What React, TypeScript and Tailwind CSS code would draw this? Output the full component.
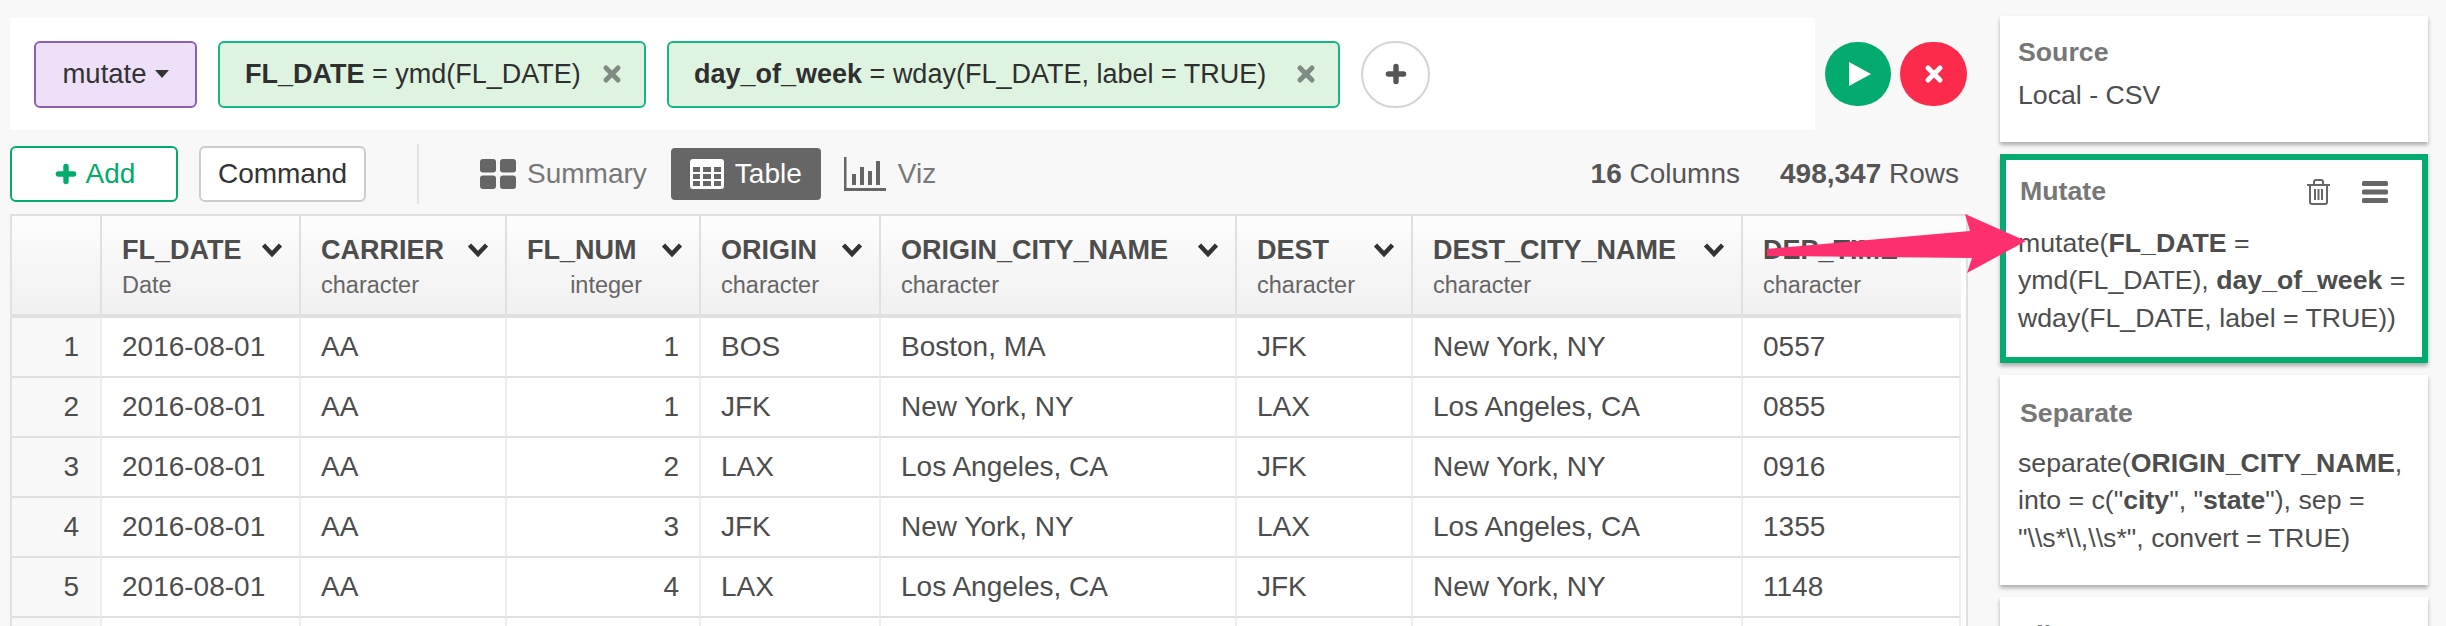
import React from 'react';
import { Plus, X } from 'lucide-react';

const font = "font-['Liberation_Sans',Arial,sans-serif]";

const columns = [
  { name: 'FL_DATE', type: 'Date', w: 'w-[199px]' },
  { name: 'CARRIER', type: 'character', w: 'w-[206px]' },
  { name: 'FL_NUM', type: 'integer', w: 'w-[194px]', right: true },
  { name: 'ORIGIN', type: 'character', w: 'w-[180px]' },
  { name: 'ORIGIN_CITY_NAME', type: 'character', w: 'w-[356px]' },
  { name: 'DEST', type: 'character', w: 'w-[176px]' },
  { name: 'DEST_CITY_NAME', type: 'character', w: 'w-[330px]' },
  { name: 'DEP_TIME', type: 'character', w: 'w-[220px]' },
];

// last row is the one cut off by the window, only its cell lines show
const rows = [
  ['1', '2016-08-01', 'AA', '1', 'BOS', 'Boston, MA', 'JFK', 'New York, NY', '0557'],
  ['2', '2016-08-01', 'AA', '1', 'JFK', 'New York, NY', 'LAX', 'Los Angeles, CA', '0855'],
  ['3', '2016-08-01', 'AA', '2', 'LAX', 'Los Angeles, CA', 'JFK', 'New York, NY', '0916'],
  ['4', '2016-08-01', 'AA', '3', 'JFK', 'New York, NY', 'LAX', 'Los Angeles, CA', '1355'],
  ['5', '2016-08-01', 'AA', '4', 'LAX', 'Los Angeles, CA', 'JFK', 'New York, NY', '1148'],
  ['', '', '', '', '', '', '', '', ''],
];

const Chevron = () => (
  <svg viewBox="0 0 22 16" className="w-[22px] h-[16px] shrink-0" fill="none" stroke="#333" strokeWidth="4.5">
    <path d="M2.5 3 L11 12 L19.5 3" />
  </svg>
);

const Chip = ({ bold, rest, w }: { bold: string; rest: string; w: string }) => (
  <div className={`${w} h-[67px] flex items-center justify-between pl-[25px] pr-[20px] bg-[#dff3e1] border-2 border-[#17b585] rounded-[6px] text-[27px] text-[#2f2f2f]`}>
    <span className="whitespace-nowrap"><b>{bold}</b> = {rest}</span>
    <X size={24} strokeWidth={5} className="text-[#7f8c84]" />
  </div>
);

const App = () => {
  return (
    <div className={`${font} relative w-[2446px] h-[626px] overflow-hidden bg-[#f8f8f8] flex`}>
      <div className="w-[2000px] shrink-0 pl-[10px] pt-[18px]">
        {/* Command bar */}
        <div className="flex items-center">
          <div className="w-[1805px] h-[112px] bg-white flex items-center pl-[24px] gap-[21px]">
            <div className="w-[163px] h-[67px] flex items-center justify-center gap-[8px] bg-[#eee0f8] border-2 border-[#8e5fb2] rounded-[6px] text-[27.5px] text-[#333]">
              mutate
              <span className="w-0 h-0 border-x-[7px] border-x-transparent border-t-[8px] border-t-[#333]" />
            </div>
            <Chip bold="FL_DATE" rest="ymd(FL_DATE)" w="w-[428px]" />
            <Chip bold="day_of_week" rest="wday(FL_DATE, label = TRUE)" w="w-[673px]" />
            <div className="w-[69px] h-[67px] rounded-full border-2 border-[#d4d4d4] flex items-center justify-center">
              <Plus size={26} strokeWidth={5} className="text-[#555]" />
            </div>
          </div>
          <div className="ml-[10px] flex gap-[9px]">
            <div className="w-[66px] h-[64px] rounded-full bg-[#04ab6e] flex items-center justify-center">
              <svg viewBox="0 0 22 24" className="w-[22px] h-[24px] ml-[3px]" fill="white">
                <path d="M0 0 L22 12 L0 24 Z" />
              </svg>
            </div>
            <div className="w-[67px] h-[64px] rounded-full bg-[#fd2b4b] flex items-center justify-center">
              <X size={24} strokeWidth={5} className="text-white" />
            </div>
          </div>
        </div>

        {/* Toolbar */}
        <div className="h-[84px] flex items-center pt-[3px] pr-[41px] text-[28px]">
          <div className="w-[168px] h-[56px] flex items-center justify-center gap-[7px] bg-white border-2 border-[#04ab6e] rounded-[6px] text-[#04ab6e]">
            <Plus size={26} strokeWidth={5} />
            Add
          </div>
          <div className="ml-[21px] w-[167px] h-[56px] flex items-center justify-center bg-white border-2 border-[#cccccc] rounded-[6px] text-[#333]">
            Command
          </div>
          <div className="ml-[51px] w-[2px] h-[60px] bg-[#e2e2e2]" />
          <div className="ml-[61px] flex items-center gap-[11px] text-[#777]">
            <svg viewBox="0 0 36 30" className="w-[36px] h-[30px]" fill="#666">
              <rect x="0" y="0" width="16" height="13.5" rx="3" />
              <rect x="20" y="0" width="16" height="13.5" rx="3" />
              <rect x="0" y="16.5" width="16" height="13.5" rx="3" />
              <rect x="20" y="16.5" width="16" height="13.5" rx="3" />
            </svg>
            Summary
          </div>
          <div className="ml-[24px] w-[150px] h-[52px] flex items-center justify-center gap-[11px] bg-[#666] rounded-[4px] text-white">
            <svg viewBox="0 0 34 30" className="w-[34px] h-[30px]" fill="white">
              <path fillRule="evenodd" d="M3 0h28a3 3 0 0 1 3 3v24a3 3 0 0 1-3 3H3a3 3 0 0 1-3-3V3a3 3 0 0 1 3-3zM3 8v5h7V8zm10 0v5h8V8zm11 0v5h7V8zM3 15v5h7v-5zm10 0v5h8v-5zm11 0v5h7v-5zM3 22v5h7v-5zm10 0v5h8v-5zm11 0v5h7v-5z" />
            </svg>
            Table
          </div>
          <div className="ml-[23px] flex items-center gap-[12px] text-[#777]">
            <svg viewBox="0 0 42 34" className="w-[42px] h-[34px]" fill="#666">
              <rect x="0" y="0" width="2.5" height="34" />
              <rect x="0" y="31" width="42" height="3" />
              <rect x="8" y="17" width="4" height="11" />
              <rect x="16" y="10" width="4" height="18" />
              <rect x="24" y="14" width="4" height="14" />
              <rect x="32" y="4" width="4" height="24" />
            </svg>
            Viz
          </div>
          <div className="ml-auto flex gap-[40px] text-[#555]">
            <span><b>16</b> Columns</span>
            <span><b>498,347</b> Rows</span>
          </div>
        </div>

        {/* Data table */}
        <div className="w-[1958px] border-x-2 border-t-2 border-[#e0e0e0] bg-white overflow-hidden">
          <table className="table-fixed border-separate border-spacing-0 w-[1949px]">
            <thead>
              <tr className="bg-gradient-to-b from-[#fdfdfd] to-[#f0f0f0] text-[#4d4d4d]">
                <th className="w-[88px] h-[102px] p-0 border-b-[4px] border-[#e0e0e0]" />
                {columns.map((col) => (
                  <th key={col.name} className={`${col.w} h-[102px] p-0 pt-[4px] pl-[20px] pr-[16px] border-l-2 border-b-[4px] border-[#e0e0e0] text-left font-normal align-middle`}>
                    <div className="flex items-center justify-between text-[27px] font-bold leading-[36px] whitespace-nowrap">
                      {col.name}
                      <Chevron />
                    </div>
                    <div className={`text-[23.5px] leading-[34px] text-[#666] ${col.right ? 'text-right pr-[41px]' : ''}`}>{col.type}</div>
                  </th>
                ))}
              </tr>
            </thead>
            <tbody className="text-[28px] text-[#4d4d4d]">
              {rows.map((row, r) => (
                <tr key={r} className="bg-white">
                  {row.map((cell, i) => (
                    <td
                      key={i}
                      className={
                        i === 0
                          ? 'h-[60px] p-0 pr-[21px] text-right bg-[#f8f8f8] border-b-2 border-[#e0e0e0]'
                          : `h-[60px] p-0 px-[20px] border-l-2 border-l-[#eeeeee] border-b-2 border-b-[#e0e0e0] whitespace-nowrap ${i === 3 ? 'text-right' : ''} ${i === 8 ? 'border-r-2 border-r-[#eeeeee]' : ''}`
                      }
                    >
                      {cell}
                    </td>
                  ))}
                </tr>
              ))}
            </tbody>
          </table>
        </div>
      </div>

      {/* Step sidebar */}
      <div className="w-[428px] shrink-0 pt-[16px] flex flex-col gap-[12px] text-[26.7px] leading-[37.5px] text-[#4d4d4d]">
        <div className="h-[126px] shrink-0 bg-white shadow-[0_3px_4px_rgba(0,0,0,0.3)] px-[18px] pt-[18px]">
          <div className="font-bold text-[#777]">Source</div>
          <div className="mt-[5px]">Local - CSV</div>
        </div>
        <div className="h-[209px] shrink-0 bg-white border-[6px] border-[#04ab6e] shadow-[0_3px_4px_rgba(0,0,0,0.3)] px-[12px] pt-[13px]">
          <div className="flex items-center justify-between pr-[22px]">
            <span className="font-bold text-[#777] pl-[2px]">Mutate</span>
            <span className="flex items-center gap-[32px]">
              <svg viewBox="0 0 23 26" className="w-[23px] h-[26px]" fill="none" stroke="#666" strokeWidth="2">
                <path d="M0 6 H23 M7 6 V3 a2 2 0 0 1 2-2 h5 a2 2 0 0 1 2 2 V6 M3 6 V23 a2 2 0 0 0 2 2 h13 a2 2 0 0 0 2-2 V6 M8 10 V21 M11.5 10 V21 M15 10 V21" />
              </svg>
              <svg viewBox="0 0 26 22" className="w-[26px] h-[22px]" fill="#666">
                <rect y="0" width="26" height="5" rx="1.5" />
                <rect y="8.5" width="26" height="5" rx="1.5" />
                <rect y="17" width="26" height="5" rx="1.5" />
              </svg>
            </span>
          </div>
          <div className="mt-[14px]">
            mutate(<b>FL_DATE</b> = ymd(FL_DATE), <b>day_of_week</b> = wday(FL_DATE, label = TRUE))
          </div>
        </div>
        <div className="h-[210px] shrink-0 bg-white shadow-[0_3px_4px_rgba(0,0,0,0.3)] px-[18px] pt-[20px]">
          <div className="font-bold text-[#777] pl-[2px]">Separate</div>
          <div className="mt-[12px]">
            separate(<b>ORIGIN_CITY_NAME</b>, into = c("<b>city</b>", "<b>state</b>"), sep = "\\s*\\,\\s*", convert = TRUE)
          </div>
        </div>
        <div className="h-[120px] shrink-0 bg-white shadow-[0_3px_4px_rgba(0,0,0,0.3)] px-[18px] pt-[20px]">
          <div className="font-bold text-[#777] pl-[2px]">Filter</div>
        </div>
      </div>

      {/* Annotation arrow */}
      <svg className="absolute left-0 top-0 w-[2446px] h-[626px] pointer-events-none" viewBox="0 0 2446 626">
        <path d="M1767 249 L1970 231 L1965 214 L2026 241 L1967 273 L1972 258 L1767 256 Z" fill="#fd2f6f" />
      </svg>
    </div>
  );
};

export default App;
